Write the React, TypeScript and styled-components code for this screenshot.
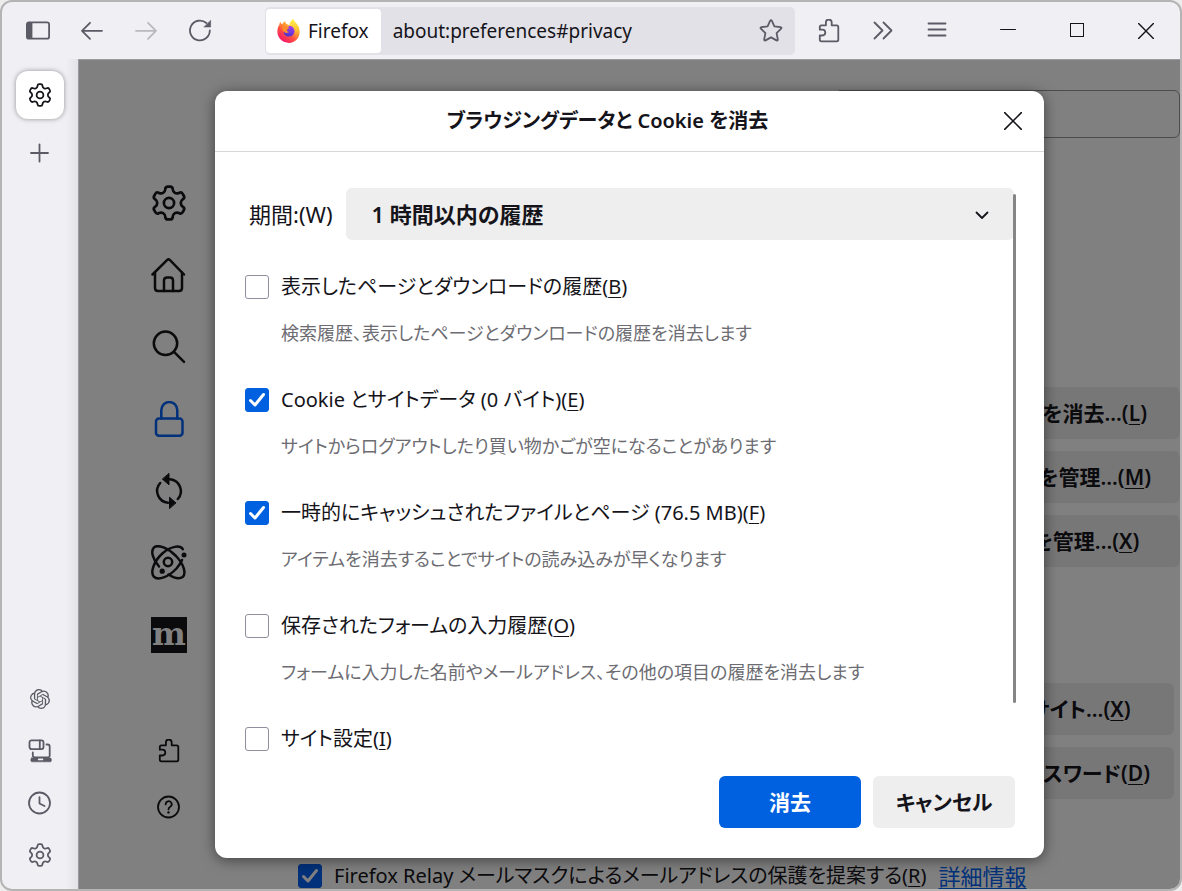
import React, { useState } from "react";
import styled, { createGlobalStyle, css } from "styled-components";

const GlobalStyle = createGlobalStyle`
  *, *::before, *::after { box-sizing: border-box; }
  body {
    margin: 0;
    background: #ededed;
    color: #15141a;
    font-family: "Noto Sans", "Noto Sans CJK JP", sans-serif;
    font-size: 20px;
    line-height: 30px;
    font-feature-settings: "palt";
  }
  button, select, input { font: inherit; font-feature-settings: inherit; color: inherit; margin: 0; }
  button { border: 0; padding: 0; background: none; cursor: pointer; }
`;

/* ---------- icons ---------- */

const Svg = styled.svg<{ $size: number }>`
  display: block;
  flex: none;
  width: ${(p) => p.$size}px;
  height: ${(p) => p.$size}px;
  fill: none;
  stroke: currentColor;
  stroke-width: 1.8;
  stroke-linecap: round;
  stroke-linejoin: round;
`;

type IconProps = { size?: number };

const gearPath = (() => {
  const shape: [number, number][] = [
    [8, -19],
    [11.2, -12],
    [11.2, 12],
    [8, 19],
  ];
  const pts: [number, number][] = [];
  for (let i = 0; i < 6; i++) {
    for (const [r, a] of shape) {
      const t = ((i * 60 + a - 90) * Math.PI) / 180;
      pts.push([12 + r * Math.cos(t), 12 + r * Math.sin(t)]);
    }
  }
  const n = pts.length;
  const toward = (a: [number, number], b: [number, number], d: number) => {
    const len = Math.hypot(b[0] - a[0], b[1] - a[1]);
    const k = Math.min(d / len, 0.5);
    return `${(a[0] + (b[0] - a[0]) * k).toFixed(2)} ${(a[1] + (b[1] - a[1]) * k).toFixed(2)}`;
  };
  return (
    pts
      .map((p, i) => {
        const prev = pts[(i + n - 1) % n];
        const next = pts[(i + 1) % n];
        return `${i ? "L" : "M"}${toward(p, prev, 1.6)}Q${p[0].toFixed(2)} ${p[1].toFixed(2)} ${toward(p, next, 1.6)}`;
      })
      .join("") + "Z"
  );
})();

const GearIcon = ({ size = 24 }: IconProps) => (
  <Svg $size={size} viewBox="0 0 24 24" aria-hidden="true">
    <path d={gearPath} />
    <circle cx="12" cy="12" r="3.4" />
  </Svg>
);

const SidebarIcon = () => (
  <Svg $size={24} viewBox="0 0 24 24" aria-hidden="true">
    <rect x="0.9" y="3.3" width="22.2" height="16.4" rx="2" />
    <path d="M1 4h5.400v15H1z" fill="currentColor" stroke="none" />
  </Svg>
);

const BackIcon = () => (
  <Svg $size={24} viewBox="0 0 24 24" aria-hidden="true">
    <path d="M22 11.800H2M10 3.800l-8 8 8 8" />
  </Svg>
);

const ForwardIcon = () => (
  <Svg $size={24} viewBox="0 0 24 24" aria-hidden="true">
    <path d="M2 11.800h20M14 3.800l8 8-8 8" />
  </Svg>
);

const ReloadIcon = () => (
  <Svg $size={24} viewBox="0 0 24 24" aria-hidden="true">
    <path d="M21.800 11.500A9.900 9.900 0 1 1 18.400 4" />
    <path d="M22.600 1.600v6.400h-6.400z" fill="currentColor" strokeWidth="0.6" />
  </Svg>
);

const StarIcon = () => (
  <Svg $size={26} viewBox="0 0 26 26" aria-hidden="true">
    <path d="M12.2 2.700q.8-1.300 1.600 0l2.600 5.600 6.100.8q1.600.3.6 1.600l-4.500 4.400 1.200 6.300q.1 1.500-1.300 1L13 19.400l-5.500 3q-1.400.5-1.300-1l1.200-6.300-4.500-4.400q-1-1.300.6-1.600l6.100-.8z" />
  </Svg>
);

const PuzzleIcon = ({ size = 24 }: IconProps) => (
  <Svg $size={size} viewBox="0 0 24 24" aria-hidden="true">
    <path d="M2.800 10.700V7.900q0-1.600 1.600-1.600H8.900V3.400a2.900 2.900 0 0 1 5.800 0v2.900h5q1.600 0 1.600 1.600v12.800q0 1.600-1.600 1.600H4.400q-1.600 0-1.600-1.600v-4.200h2.600a2.900 2.900 0 0 0 0-5.800z" />
  </Svg>
);

const OverflowIcon = () => (
  <Svg $size={24} viewBox="0 0 24 24" aria-hidden="true">
    <path d="M3.500 3.500l8 8-8 8M12.500 3.500l8 8-8 8" />
  </Svg>
);

const MenuIcon = () => (
  <Svg $size={24} viewBox="0 0 24 24" aria-hidden="true">
    <path d="M3.500 4.500h17M3.500 10.500h17M3.500 16.500h17" />
  </Svg>
);

const MinimizeIcon = () => (
  <Svg $size={16} viewBox="0 0 16 16" aria-hidden="true">
    <path d="M.5 6.500h15" style={{ strokeWidth: 1 }} />
  </Svg>
);

const MaximizeIcon = () => (
  <Svg $size={16} viewBox="0 0 16 16" aria-hidden="true">
    <rect x="1.500" y="0.500" width="13" height="13" style={{ strokeWidth: 1, strokeLinejoin: "miter" }} />
  </Svg>
);

const CloseIcon = ({ size = 16 }: IconProps) => (
  <Svg $size={size} viewBox="0 0 16 16" aria-hidden="true">
    <path d="M.6.6l14.800 14.800M15.400.6L.6 15.400" style={{ strokeWidth: 1.4 }} />
  </Svg>
);

const PlusIcon = () => (
  <Svg $size={20} viewBox="0 0 20 20" aria-hidden="true">
    <path d="M9.500 1.500v17M1 10h17" />
  </Svg>
);

const HomeIcon = () => (
  <Svg $size={36} viewBox="0 -1 36 36" aria-hidden="true">
    <g strokeWidth="2.5">
      <path d="M1.500 16.500L16 2.200q1.500-1.500 3 0l14 14.300" />
      <path d="M4 14.500V30q0 3 3 3h21q3 0 3-3V14.500" />
      <path d="M13 33V22.500q0-3 3-3h3q3 0 3 3V33" />
    </g>
  </Svg>
);

const SearchIcon = () => (
  <Svg $size={36} viewBox="0 0 36 36" aria-hidden="true">
    <g strokeWidth="2.5">
      <circle cx="14.500" cy="14.300" r="11.700" />
      <path d="M23 22.800L33 32.800" />
    </g>
  </Svg>
);

const LockIcon = () => (
  <Svg $size={36} viewBox="0 0 36 36" aria-hidden="true">
    <g strokeWidth="2.5">
      <rect x="5" y="17.500" width="26.500" height="17.200" rx="3" />
      <path d="M10.300 17.500V9a8 8 0 0 1 16 0v8.500" />
    </g>
  </Svg>
);

const SyncIcon = () => (
  <Svg $size={36} viewBox="0 0 36 36" aria-hidden="true">
    <g strokeWidth="2.500">
      <path d="M19 6.200A11.900 11.900 0 0 1 26.800 26" />
      <path d="M17 29.800A11.900 11.900 0 0 1 9.200 10" />
    </g>
    <path d="M18 .8v11L11.600 6.300z" fill="currentColor" strokeWidth="1" />
    <path d="M18.500 35.200V24.200l6.200 5.500z" fill="currentColor" strokeWidth="1" />
  </Svg>
);

const AtomIcon = () => (
  <Svg $size={36} viewBox="0 1 36 36" aria-hidden="true">
    <g strokeWidth="2.500">
      <path d="M31.800 5.200C29 .8 20 2 11.300 9.500C3 17.200-1 28 2.800 32.600C7 37 17.500 33 25.500 24.500C28 21.500 30 18.500 31 16" />
      <path d="M8 22.500C1.500 15 -.5 7 3 3.400C7 0 17 4 25 12C33 20.500 35.500 29.500 31.600 33C28.500 35.200 23 34 17.500 30.500" />
      <circle cx="17" cy="18" r="4.200" />
    </g>
    <circle cx="33" cy="11" r="2.500" fill="currentColor" stroke="none" />
    <circle cx="11.200" cy="27.200" r="2.600" fill="currentColor" stroke="none" />
  </Svg>
);

const HelpIcon = () => (
  <Svg $size={24} viewBox="0 0 24 24" aria-hidden="true">
    <circle cx="11.500" cy="12" r="10.500" />
    <path d="M8.700 9.400a3 3 0 1 1 4.500 2.400q-1.700 1-1.700 2.600" />
    <circle cx="11.500" cy="17.400" r="1.200" fill="currentColor" stroke="none" />
  </Svg>
);

const ClockIcon = () => (
  <Svg $size={24} viewBox="0 0 24 24" aria-hidden="true">
    <circle cx="11.500" cy="12" r="10.500" />
    <path d="M11.500 6.200v6.300l5 2.500" />
  </Svg>
);

const DevicesIcon = () => (
  <Svg $size={24} viewBox="0 0 24 24" aria-hidden="true">
    <rect x="1.500" y="1.300" width="14" height="8.800" rx="2" />
    <path d="M11.800 1.500v8.500" />
    <path d="M18.500 5.500h1.200q2 0 2 2v9.300q0 1.500-1.500 1.500H6.500q-1.700 0-1.700-1.700V13.500" />
    <path d="M3.500 19h19.200q1.600 2 0 3.800H3.500Q1.900 21 3.500 19z" fill="currentColor" strokeWidth="0.600" />
    <path d="M10.800 20.400h3.600" stroke="#f0eff4" />
  </Svg>
);

const ChatIcon = () => (
  <Svg $size={20} viewBox="0 0 24 24" aria-hidden="true">
    <path
      fill="currentColor"
      stroke="none"
      d="M22.2819 9.8211a5.9847 5.9847 0 0 0-.5157-4.9108 6.0462 6.0462 0 0 0-6.5098-2.9A6.0651 6.0651 0 0 0 4.9807 4.1818a5.9847 5.9847 0 0 0-3.9977 2.9 6.0462 6.0462 0 0 0 .7427 7.0966 5.98 5.98 0 0 0 .511 4.9107 6.051 6.051 0 0 0 6.5146 2.9001A5.9847 5.9847 0 0 0 13.2599 24a6.0557 6.0557 0 0 0 5.7718-4.2058 5.9894 5.9894 0 0 0 3.9977-2.9001 6.0557 6.0557 0 0 0-.7475-7.0729zm-9.022 12.6081a4.4755 4.4755 0 0 1-2.8764-1.0408l.1419-.0804 4.7783-2.7582a.7948.7948 0 0 0 .3927-.6813v-6.7369l2.02 1.1686a.071.071 0 0 1 .038.052v5.5826a4.504 4.504 0 0 1-4.4945 4.4944zm-9.6607-4.1254a4.4708 4.4708 0 0 1-.5346-3.0137l.142.0852 4.783 2.7582a.7712.7712 0 0 0 .7806 0l5.8428-3.3685v2.3324a.0804.0804 0 0 1-.0332.0615L9.74 19.9502a4.4992 4.4992 0 0 1-6.1408-1.6464zM2.3408 7.8956a4.485 4.485 0 0 1 2.3655-1.9728V11.6a.7664.7664 0 0 0 .3879.6765l5.8144 3.3543-2.0201 1.1685a.0757.0757 0 0 1-.071 0l-4.8303-2.7865A4.504 4.504 0 0 1 2.3408 7.872zm16.5963 3.8558L13.1038 8.364 15.1192 7.2a.0757.0757 0 0 1 .071 0l4.8303 2.7913a4.4944 4.4944 0 0 1-.6765 8.1042v-5.6772a.79.79 0 0 0-.407-.667zm2.0107-3.0231l-.142-.0852-4.7735-2.7818a.7759.7759 0 0 0-.7854 0L9.409 9.2297V6.8974a.0662.0662 0 0 1 .0284-.0615l4.8303-2.7866a4.4992 4.4992 0 0 1 6.6802 4.66zM8.3065 12.863l-2.02-1.1638a.0804.0804 0 0 1-.038-.0567V6.0742a4.4992 4.4992 0 0 1 7.3757-3.4537l-.142.0805L8.704 5.459a.7948.7948 0 0 0-.3927.6813zm1.0976-2.3654l2.602-1.4998 2.6069 1.4998v2.9994l-2.5974 1.4997-2.6067-1.4997Z"
    />
  </Svg>
);

const FirefoxLogo = () => (
  <Svg $size={24} viewBox="0 0 24 24" aria-hidden="true">
    <defs>
      <linearGradient id="ffBody" x1="0.85" y1="0.1" x2="0.25" y2="0.95">
        <stop offset="0" stopColor="#fff44f" />
        <stop offset="0.35" stopColor="#ffa436" />
        <stop offset="0.65" stopColor="#ff4f3e" />
        <stop offset="1" stopColor="#f5156c" />
      </linearGradient>
      <linearGradient id="ffFlame" x1="0.5" y1="0" x2="0.5" y2="1">
        <stop offset="0" stopColor="#fff44f" />
        <stop offset="0.6" stopColor="#ffbd2f" />
        <stop offset="1" stopColor="#ff7139" />
      </linearGradient>
      <linearGradient id="ffGlobe" x1="0.7" y1="0" x2="0.3" y2="1">
        <stop offset="0" stopColor="#a23cf0" />
        <stop offset="1" stopColor="#4a35c8" />
      </linearGradient>
    </defs>
    <g stroke="none">
      <path
        fill="url(#ffBody)"
        d="M3.300 2.500c.2 1.500.9 2.200 1.800 2.700C6 3.600 7.600 2.600 8.200 2c0 1.400.5 2.500 1.500 3L14 7c-.7-3 .8-5.600 2.300-6.900.3 2 1.500 2.800 3 4.400.6.500.9 1 1 1.600.9.500 1.200 1.200 1.500 2.200 3.200 8.500-2.600 15.600-9.800 15.600C5.500 23.900.4 18.800.4 12.800.4 9 1.500 7 2.400 5.700 2.500 4.500 2.800 3.300 3.300 2.500z"
      />
      <path
        fill="url(#ffFlame)"
        d="M12.500 6.500c-.3-3 1.800-5.400 3.800-6.500.2 2.200 1.800 3 3.300 4.800 4 5 2.900 11.600-1.600 14.300 1.200-3.500.3-8.700-5.500-12.600z"
      />
      <path
        fill="url(#ffGlobe)"
        d="M12.500 6.800c2.800.3 5 2.600 5 5.500a5.300 5.300 0 0 1-5.600 5.300c-3.200 0-5.400-2.300-5.200-5.400 0-1.700.7-2.700 1.700-3.700.9.900 2.400 1 4.100-1.700z"
      />
      <path
        fill="#ff8a2b"
        d="M5.300 7.500c1.700-.8 3.500-.3 4.700.9 1 .2 2 .2 2.300.4-.2 1-1.700 1.300-2.300 1.900-.2 1.500.9 2.300 2.300 2.100-1 1.300-3.500 1.700-5.200.3-1.500-1.300-2.300-3.300-1.800-5.600z"
      />
    </g>
  </Svg>
);

/* ---------- window frame ---------- */

const Window = styled.div`
  display: flex;
  flex-direction: column;
  height: 100vh;
  border: 2px solid #b4b4b4;
  border-radius: 12px;
  overflow: hidden;
  background: #f0eff4;
`;

const Toolbar = styled.header`
  display: flex;
  align-items: center;
  flex: none;
  height: 57px;
  padding-left: 9px;
`;

const ToolButton = styled.button<{ $width?: number; $color?: string }>`
  display: flex;
  align-items: center;
  justify-content: center;
  flex: none;
  width: ${(p) => p.$width ?? 54}px;
  height: 44px;
  color: ${(p) => p.$color ?? "#5b5b66"};
  &:disabled { color: #b9b9bf; }
`;

const UrlBar = styled.div`
  display: flex;
  align-items: center;
  flex: 1;
  min-width: 0;
  height: 48px;
  margin: 0 7px 0 38px;
  padding: 0 0 0 1px;
  border-radius: 5px;
  background: #e2e1e7;
`;

const Identity = styled.button`
  display: flex;
  align-items: center;
  gap: 7px;
  flex: none;
  height: 44px;
  padding: 0 12px 0 11px;
  border-radius: 4px;
  background: #fff;
  font-size: 19px;
`;

const UrlInput = styled.input`
  flex: 1;
  min-width: 0;
  height: 44px;
  padding: 0 12px;
  border: 0;
  outline: 0;
  background: transparent;
  font-size: 19px;
`;

const WindowControls = styled.div`
  display: flex;
  margin-left: 9px;
`;

const Body = styled.div`
  display: flex;
  flex: 1;
  min-height: 0;
`;

const Sidebar = styled.aside`
  display: flex;
  flex-direction: column;
  align-items: center;
  justify-content: space-between;
  flex: none;
  width: 76px;
  padding: 12px 0 16px;
  background: linear-gradient(to right, transparent 64px, #e3e2e7);
`;

const SidebarGroup = styled.div`
  display: flex;
  flex-direction: column;
  align-items: center;
  gap: 16px;
`;

const SideButton = styled.button<{ $active?: boolean }>`
  display: flex;
  align-items: center;
  justify-content: center;
  width: 36px;
  height: 36px;
  color: #5b5b66;
  ${(p) =>
    p.$active &&
    css`
      width: 48px;
      height: 48px;
      border-radius: 12px;
      background: #fff;
      color: #15141a;
      box-shadow: 0 0 5px rgba(0, 0, 0, 0.4);
    `}
`;

/* ---------- preferences page ---------- */

const Page = styled.main`
  position: relative;
  display: flex;
  flex: 1;
  min-width: 0;
  overflow: hidden;
  border-top: 1px solid #9a9a9f;
  border-left: 1px solid #9a9a9f;
  background: #808080;
  color: #0b0a0d;
`;

const Nav = styled.nav`
  display: flex;
  flex-direction: column;
  justify-content: space-between;
  flex: none;
  width: 180px;
  padding: 125px 0 70px;
`;

const NavList = styled.div<{ $gap: number }>`
  display: flex;
  flex-direction: column;
  align-items: center;
  gap: ${(p) => p.$gap}px;
`;

const NavLink = styled.a<{ $current?: boolean }>`
  display: block;
  color: ${(p) => (p.$current ? "#00317a" : "#0b0a0d")};
`;

const MozillaMark = styled.span`
  display: block;
  width: 36px;
  height: 36px;
  background: #0b0a0d;
  color: #808080;
  font: bold 32px/34px "DejaVu Serif", serif;
  text-align: center;
`;

const Pane = styled.div`
  display: flex;
  flex-direction: column;
  flex: 1;
  min-width: 0;
  padding: 30px 0 0 39px;
`;

const SearchField = styled.input`
  align-self: flex-end;
  flex: none;
  width: 345px;
  height: 48px;
  border: 1px solid #4c4c4f;
  border-radius: 6px;
  background: transparent;
`;

const ButtonStack = styled.div<{ $top: number; $inset?: number }>`
  display: flex;
  flex-direction: column;
  align-items: flex-end;
  gap: 12px;
  margin-top: ${(p) => p.$top}px;
  padding-right: ${(p) => p.$inset ?? 0}px;
`;

const PageButton = styled.button`
  min-width: 230px;
  height: 52px;
  padding: 0 24px;
  border-radius: 6px;
  background: #777778;
  font-size: 21px;
  font-weight: 600;
  white-space: nowrap;
`;

const RelayRow = styled.div`
  display: flex;
  align-items: center;
  gap: 12px;
  margin-top: 65px;
  line-height: 24px;
  white-space: nowrap;
`;

const DimLink = styled.a`
  color: #00317a;
  font-size: 22px;
  text-underline-offset: 3px;
`;

const Key = styled.u`
  text-underline-offset: 3px;
  text-decoration-thickness: 1px;
`;

/* ---------- dialog ---------- */

const Overlay = styled.div`
  position: absolute;
  inset: 0;
  display: flex;
  align-items: center;
  justify-content: center;
`;

const Dialog = styled.section`
  display: flex;
  flex-direction: column;
  width: min(829px, calc(100% - 32px));
  border-radius: 12px;
  background: #fff;
  color: #15141a;
  box-shadow: 0 2px 14px rgba(0, 0, 0, 0.5);
`;

const DialogHeader = styled.div`
  display: flex;
  align-items: center;
  height: 61px;
  padding-right: 18px;
  border-bottom: 1px solid #d7d7d8;
`;

const DialogTitle = styled.h1`
  flex: 1;
  margin: 0;
  font-size: 20px;
  font-weight: 600;
  text-align: center;
`;

const DialogClose = styled.button`
  display: flex;
  align-items: center;
  justify-content: center;
  width: 26px;
  height: 26px;
`;

const DialogBody = styled.div`
  position: relative;
  display: flex;
  flex-direction: column;
  padding: 36px 30px 22px;
`;

const ScrollThumb = styled.div`
  position: absolute;
  top: 42px;
  right: 28px;
  width: 3px;
  height: 509px;
  border-radius: 2px;
  background: #858585;
`;

const RangeRow = styled.div`
  display: flex;
  align-items: center;
  gap: 13px;
  padding-left: 4px;
  font-size: 22px;
`;

const SelectBox = styled.div`
  position: relative;
  flex: 1;
`;

const RangeSelect = styled.select`
  display: block;
  width: 100%;
  height: 52px;
  padding: 0 48px 0 26px;
  border: 0;
  border-radius: 6px;
  background: #eeeeee;
  appearance: none;
  font-weight: 600;
`;

const Chevron = styled(Svg)`
  position: absolute;
  top: 20px;
  right: 25px;
  pointer-events: none;
`;

const Options = styled.div`
  display: flex;
  flex-direction: column;
  gap: 37px;
  margin-top: 32px;
`;

const Option = styled.div`
  display: grid;
  grid-template-columns: 24px 1fr;
  align-items: center;
  column-gap: 12px;
  row-gap: 16px;
`;

const Check = styled.input<{ $dim?: boolean }>`
  flex: none;
  width: 24px;
  height: 24px;
  appearance: none;
  border: 1px solid #8f8f9d;
  border-radius: 3px;
  background: #fff;
  &:checked {
    border-color: ${(p) => (p.$dim ? "#00317a" : "#0061e0")};
    background: ${(p) => (p.$dim ? "#00317a" : "#0061e0")}
      url("data:image/svg+xml,%3Csvg xmlns='http://www.w3.org/2000/svg' viewBox='0 0 24 24'%3E%3Cpath d='M5.500 12.500l4.500 4.500L18.500 6.500' fill='none' stroke='${(p) =>
        p.$dim ? "%23808080" : "white"}' stroke-width='3' stroke-linecap='round' stroke-linejoin='round'/%3E%3C/svg%3E")
      center / 24px 24px no-repeat;
  }
`;

const Hint = styled.p`
  grid-column: 2;
  margin: 0;
  color: #6c6c72;
  font-size: 18px;
`;

const Actions = styled.div`
  display: flex;
  justify-content: flex-end;
  gap: 12px;
  padding: 0 29px 30px;
`;

const ActionButton = styled.button<{ $primary?: boolean }>`
  width: 142px;
  height: 52px;
  border-radius: 6px;
  background: ${(p) => (p.$primary ? "#0061e0" : "#eeeeee")};
  color: ${(p) => (p.$primary ? "#fff" : "#15141a")};
  font-size: 21px;
  font-weight: 600;
`;

const options = [
  { id: "history", text: "表示したページとダウンロードの履歴", key: "B", hint: "検索履歴、表示したページとダウンロードの履歴を消去します", on: false },
  { id: "cookies", text: "Cookie とサイトデータ (0 バイト)", key: "E", hint: "サイトからログアウトしたり買い物かごが空になることがあります", on: true },
  { id: "cache", text: "一時的にキャッシュされたファイルとページ (76.5 MB)", key: "F", hint: "アイテムを消去することでサイトの読み込みが早くなります", on: true },
  { id: "forms", text: "保存されたフォームの入力履歴", key: "O", hint: "フォームに入力した名前やメールアドレス、その他の項目の履歴を消去します", on: false },
  { id: "sites", text: "サイト設定", key: "I", hint: "", on: false },
];

const Accel = ({ k }: { k: string }) => (
  <>
    (<Key>{k}</Key>)
  </>
);

export default function App() {
  const [checked, setChecked] = useState<Record<string, boolean>>(
    Object.fromEntries(options.map((o) => [o.id, o.on]))
  );
  const [relay, setRelay] = useState(true);

  return (
    <>
      <GlobalStyle />
      <Window>
        <Toolbar>
          <ToolButton aria-label="サイドバー"><SidebarIcon /></ToolButton>
          <ToolButton aria-label="戻る"><BackIcon /></ToolButton>
          <ToolButton aria-label="進む" disabled><ForwardIcon /></ToolButton>
          <ToolButton aria-label="再読み込み"><ReloadIcon /></ToolButton>
          <UrlBar>
            <Identity><FirefoxLogo />Firefox</Identity>
            <UrlInput aria-label="URL" defaultValue="about:preferences#privacy" />
            <ToolButton $width={48} aria-label="ブックマーク"><StarIcon /></ToolButton>
          </UrlBar>
          <ToolButton aria-label="拡張機能"><PuzzleIcon /></ToolButton>
          <ToolButton aria-label="その他のツール"><OverflowIcon /></ToolButton>
          <ToolButton aria-label="メニュー"><MenuIcon /></ToolButton>
          <WindowControls>
            <ToolButton $width={69} $color="#15141a" aria-label="最小化"><MinimizeIcon /></ToolButton>
            <ToolButton $width={69} $color="#15141a" aria-label="最大化"><MaximizeIcon /></ToolButton>
            <ToolButton $width={69} $color="#15141a" aria-label="閉じる"><CloseIcon /></ToolButton>
          </WindowControls>
        </Toolbar>

        <Body>
          <Sidebar>
            <SidebarGroup>
              <SideButton $active aria-label="設定タブ"><GearIcon /></SideButton>
              <SideButton aria-label="新しいタブ"><PlusIcon /></SideButton>
            </SidebarGroup>
            <SidebarGroup>
              <SideButton aria-label="AI チャット"><ChatIcon /></SideButton>
              <SideButton aria-label="他の端末のタブ"><DevicesIcon /></SideButton>
              <SideButton aria-label="履歴"><ClockIcon /></SideButton>
              <SideButton aria-label="サイドバーの設定"><GearIcon /></SideButton>
            </SidebarGroup>
          </Sidebar>

          <Page>
            <Nav>
              <NavList $gap={36}>
                <NavLink href="#general" aria-label="一般"><GearIcon size={36} /></NavLink>
                <NavLink href="#home" aria-label="ホーム"><HomeIcon /></NavLink>
                <NavLink href="#search" aria-label="検索"><SearchIcon /></NavLink>
                <NavLink href="#privacy" aria-label="プライバシー" $current><LockIcon /></NavLink>
                <NavLink href="#sync" aria-label="同期"><SyncIcon /></NavLink>
                <NavLink href="#experimental" aria-label="実験"><AtomIcon /></NavLink>
                <NavLink href="#more" aria-label="Mozilla"><MozillaMark>m</MozillaMark></NavLink>
              </NavList>
              <NavList $gap={32}>
                <NavLink href="#addons" aria-label="拡張機能とテーマ"><PuzzleIcon /></NavLink>
                <NavLink href="#help" aria-label="サポート"><HelpIcon /></NavLink>
              </NavList>
            </Nav>

            <Pane>
              <SearchField aria-label="設定を検索" />
              <ButtonStack $top={249}>
                <PageButton>データを消去...<Accel k="L" /></PageButton>
                <PageButton>データを管理...<Accel k="M" /></PageButton>
                <PageButton>例外を管理...<Accel k="X" /></PageButton>
              </ButtonStack>
              <ButtonStack $top={116} $inset={6}>
                <PageButton>例外サイト...<Accel k="X" /></PageButton>
                <PageButton>保存されているパスワード<Accel k="D" /></PageButton>
              </ButtonStack>
              <RelayRow>
                <Check $dim type="checkbox" id="relay" checked={relay} onChange={() => setRelay(!relay)} />
                <label htmlFor="relay">Firefox Relay メールマスクによるメールアドレスの保護を提案する<Accel k="R" /></label>
                <DimLink href="#relay">詳細情報</DimLink>
              </RelayRow>
            </Pane>

            <Overlay>
              <Dialog role="dialog" aria-modal="true" aria-labelledby="dialog-title">
                <DialogHeader>
                  <DialogTitle id="dialog-title">ブラウジングデータと Cookie を消去</DialogTitle>
                  <DialogClose aria-label="閉じる"><CloseIcon size={18} /></DialogClose>
                </DialogHeader>
                <DialogBody>
                  <RangeRow>
                    <label htmlFor="range">期間:(W)</label>
                    <SelectBox>
                      <RangeSelect id="range">
                        <option>1 時間以内の履歴</option>
                      </RangeSelect>
                      <Chevron $size={14} viewBox="0 0 14 14" aria-hidden="true">
                        <path d="M1.500 4.500L7 10l5.500-5.500" />
                      </Chevron>
                    </SelectBox>
                  </RangeRow>
                  <Options>
                    {options.map((o) => (
                      <Option key={o.id}>
                        <Check
                          type="checkbox"
                          id={o.id}
                          checked={checked[o.id]}
                          onChange={() => setChecked({ ...checked, [o.id]: !checked[o.id] })}
                        />
                        <label htmlFor={o.id}>{o.text}<Accel k={o.key} /></label>
                        {o.hint && <Hint>{o.hint}</Hint>}
                      </Option>
                    ))}
                  </Options>
                  <ScrollThumb />
                </DialogBody>
                <Actions>
                  <ActionButton $primary>消去</ActionButton>
                  <ActionButton>キャンセル</ActionButton>
                </Actions>
              </Dialog>
            </Overlay>
          </Page>
        </Body>
      </Window>
    </>
  );
}
